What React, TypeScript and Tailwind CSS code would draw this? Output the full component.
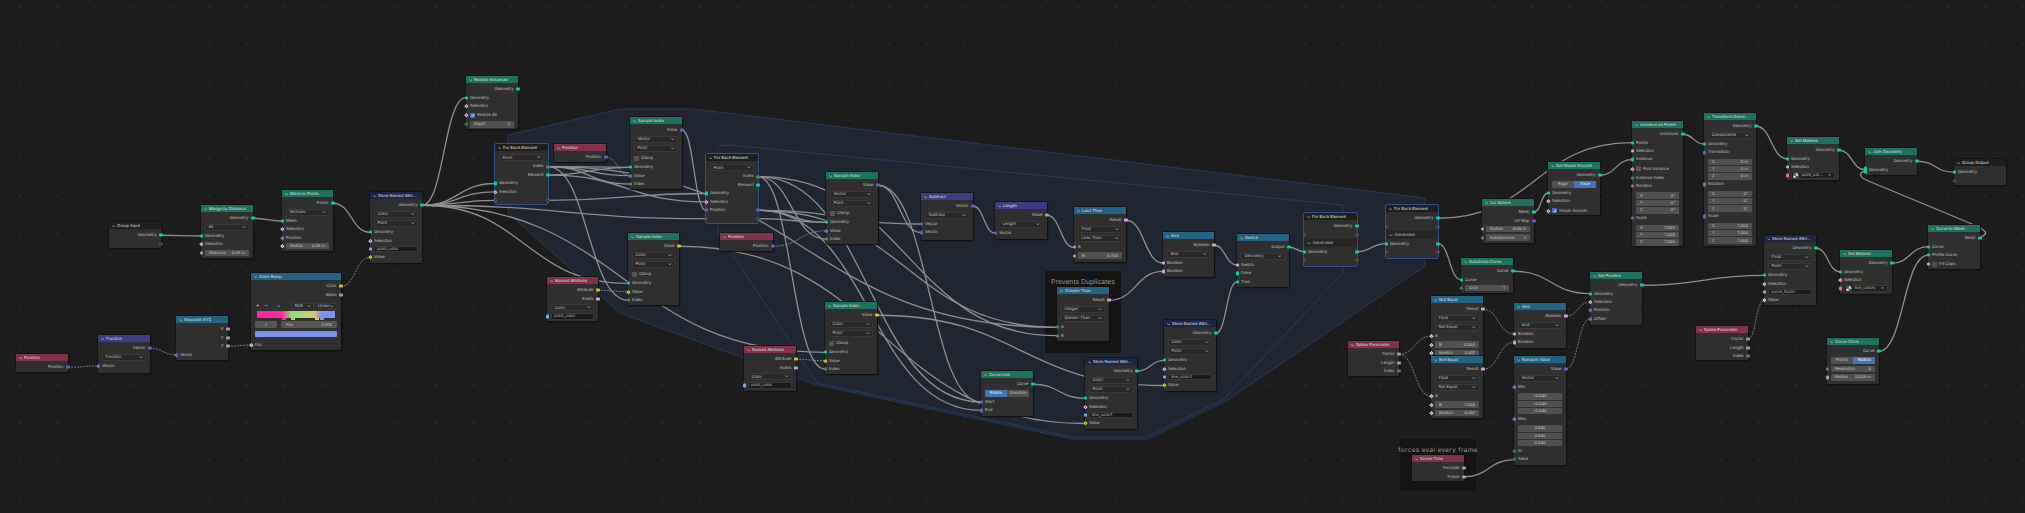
import React from 'react';

type Sock = 'geo' | 'vec' | 'flt' | 'int' | 'bool' | 'col' | 'str' | 'mat' | 'rot' | 'none';
type Kind = 'out' | 'in' | 'both' | 'sel' | 'chk' | 'val' | 'vec' | 'str' | 'mat' | 'seg' | 'gap' | 'sub' | 'ramp' | 'multi';

interface Row {
  k: Kind;
  t?: string;
  v?: string;
  c?: Sock; // socket type
  rc?: Sock; // right socket on 'both' rows
  d?: boolean; // field input: diamond socket
  on?: boolean; // checkbox state, or which half of a segmented control
}

interface GNode {
  id: string;
  title: string;
  head: string;
  x: number;
  y: number;
  w: number;
  h: number;
  rows: Row[];
  zone?: boolean;
}

// row heights, kept in step with rowClass below so link ends land on sockets
const rowH: Record<Kind, number> = {
  out: 8.5, in: 8.4, both: 8.4, sel: 9.3, chk: 10, val: 8.4, vec: 7.4, str: 8.4, mat: 8.4, seg: 9.3, gap: 1.5, sub: 8.5, ramp: 41.8, multi: 8.4,
};

const rowClass: Record<Kind, string> = {
  out: 'h-[8.5px]', in: 'h-[8.4px]', both: 'h-[8.4px]', sel: 'h-[9.3px]', chk: 'h-[10px]', val: 'h-[8.4px]', vec: 'h-[7.4px]', str: 'h-[8.4px]', mat: 'h-[8.4px]', seg: 'h-[9.3px]', gap: 'h-[1.5px]', sub: 'h-[8.5px]', ramp: 'h-[41.8px]', multi: 'h-[8.4px]',
};

const sockBg: Record<Sock, string> = {
  geo: 'bg-[#00d6a3]', vec: 'bg-[#6363c7]', flt: 'bg-[#a1a1a1]', int: 'bg-[#4f8a54]', bool: 'bg-[#cca6d6]', col: 'bg-[#c7c729]', str: 'bg-[#70b2ff]', mat: 'bg-[#eb7582]', rot: 'bg-[#a363c7]', none: 'bg-transparent',
};
const sockBorder: Record<Sock, string> = {
  geo: 'border-[#00d6a3]', vec: 'border-[#8080e0]', flt: 'border-[#e0e0e0]', int: 'border-[#4f8a54]', bool: 'border-[#e0c0ea]', col: 'border-[#e0e030]', str: 'border-[#70b2ff]', mat: 'border-[#eb7582]', rot: 'border-[#a363c7]', none: 'border-[#666666]',
};

const GREEN = 'bg-[#1d725e]';
const RED = 'bg-[#83314a]';
const PURPLE = 'bg-[#3c3c83]';
const BLUE = 'bg-[#246283]';
const NAVY = 'bg-[#1d2546]';
const DARK = 'bg-[#1e1e1e]';

const o = (t: string, c: Sock): Row => ({ k: 'out', t, c });
const i = (t: string, c: Sock, d = false): Row => ({ k: 'in', t, c, d });
const s = (t: string): Row => ({ k: 'sel', t });
const val = (t: string, v: string, c?: Sock, d = false): Row => ({ k: 'val', t, v, c, d });
const vec = (t: string, v: string): Row => ({ k: 'vec', t, v });
const gap: Row = { k: 'gap' };
const vec3 = (a: string, b: string, c: string, d = false): Row[] => [gap, vec(d ? '' : 'X', a), vec(d ? '' : 'Y', b), vec(d ? '' : 'Z', c)];
const both = (t: string, c: Sock, rc: Sock): Row => ({ k: 'both', t, c, rc });

const sampleRows = (type: string, c: Sock): Row[] => [
  o('Value', c), s(type), s('Point'), { k: 'chk', t: 'Clamp' }, i('Geometry', 'geo'), i('Value', c, true), i('Index', 'int'),
];
const storeRows = (type: string, name: string, c: Sock): Row[] => [
  o('Geometry', 'geo'), s(type), s('Point'), i('Geometry', 'geo'), i('Selection', 'bool', true), { k: 'str', t: name, c: 'str' }, i('Value', c, true),
];
const attrRows = (): Row[] => [o('Attribute', 'col'), o('Exists', 'bool'), s('Color'), { k: 'str', t: 'point_color', c: 'str' }];
const zoneOutRows = (): Row[] => [
  o('Geometry', 'geo'), both('', 'none', 'none'), { k: 'sub', t: 'Generated' }, both('Geometry', 'geo', 'geo'), both('', 'none', 'none'),
];
const splineRows = (): Row[] => [o('Factor', 'flt'), o('Length', 'flt'), o('Index', 'int')];
const notEqualRows = (b: string): Row[] => [
  o('Result', 'bool'), s('Float'), s('Not Equal'), i('A', 'flt', true), val('B', b, 'flt', true), val('Epsilon', '0.001', 'flt', true),
];

const nodes: GNode[] = [
  { id: 'gin', title: 'Group Input', head: DARK, x: 109, y: 222, w: 52, h: 26, rows: [o('Geometry', 'geo'), o('', 'none')] },
  { id: 'merge', title: 'Merge by Distance', head: GREEN, x: 201, y: 205, w: 52, h: 53, rows: [o('Geometry', 'geo'), s('All'), i('Geometry', 'geo'), i('Selection', 'bool', true), val('Distance', '0.33 m', 'flt')] },
  { id: 'm2p', title: 'Mesh to Points', head: GREEN, x: 282, y: 190, w: 51, h: 61, rows: [o('Points', 'geo'), s('Vertices'), i('Mesh', 'geo'), i('Selection', 'bool', true), i('Position', 'vec', true), val('Radius', '0.05 m', 'flt', true)] },
  { id: 'store1', title: 'Store Named Attri...', head: NAVY, x: 370, y: 192, w: 52, h: 71, rows: storeRows('Color', 'point_color', 'col') },
  { id: 'ramp', title: 'Color Ramp', head: BLUE, x: 251, y: 273, w: 90, h: 77, rows: [o('Color', 'col'), o('Alpha', 'flt'), { k: 'ramp' }, i('Fac', 'flt', true)] },
  { id: 'sep', title: 'Separate XYZ', head: BLUE, x: 176, y: 316, w: 52, h: 44, rows: [o('X', 'flt'), o('Y', 'flt'), o('Z', 'flt'), i('Vector', 'vec', true)] },
  { id: 'frac', title: 'Fraction', head: PURPLE, x: 98, y: 335, w: 52, h: 38, rows: [o('Vector', 'vec'), s('Fraction'), i('Vector', 'vec', true)] },
  { id: 'pos1', title: 'Position', head: RED, x: 16, y: 354, w: 52, h: 18, rows: [o('Position', 'vec')] },
  { id: 'realize', title: 'Realize Instances', head: GREEN, x: 466, y: 76, w: 52, h: 53, rows: [o('Geometry', 'geo'), i('Geometry', 'geo'), i('Selection', 'bool', true), { k: 'chk', t: 'Realize All', c: 'bool', d: true, on: true }, val('Depth', '0', 'int', true)] },
  { id: 'fe1', title: 'For Each Element', head: DARK, zone: true, x: 495, y: 144, w: 53, h: 60, rows: [s('Point'), o('Index', 'int'), o('Element', 'geo'), i('Geometry', 'geo'), i('Selection', 'bool', true), both('', 'none', 'none')] },
  { id: 'pos2', title: 'Position', head: RED, x: 554, y: 144, w: 52, h: 18, rows: [o('Position', 'vec')] },
  { id: 's1', title: 'Sample Index', head: GREEN, x: 630, y: 117, w: 52, h: 72, rows: sampleRows('Vector', 'vec') },
  { id: 'fe2', title: 'For Each Element', head: DARK, zone: true, x: 706, y: 154, w: 52, h: 69, rows: [s('Point'), o('Index', 'int'), o('Element', 'geo'), i('Geometry', 'geo'), i('Selection', 'bool', true), both('Position', 'vec', 'vec'), both('', 'none', 'none')] },
  { id: 's2', title: 'Sample Index', head: GREEN, x: 826, y: 172, w: 52, h: 72, rows: sampleRows('Vector', 'vec') },
  { id: 's3', title: 'Sample Index', head: GREEN, x: 628, y: 233, w: 51, h: 72, rows: sampleRows('Color', 'col') },
  { id: 'pos3', title: 'Position', head: RED, x: 720, y: 233, w: 53, h: 18, rows: [o('Position', 'vec')] },
  { id: 'na1', title: 'Named Attribute', head: RED, x: 547, y: 277, w: 51, h: 44, rows: attrRows() },
  { id: 'na2', title: 'Named Attribute', head: RED, x: 744, y: 346, w: 52, h: 45, rows: attrRows() },
  { id: 's4', title: 'Sample Index', head: GREEN, x: 825, y: 302, w: 52, h: 72, rows: sampleRows('Color', 'col') },
  { id: 'sub', title: 'Subtract', head: PURPLE, x: 921, y: 193, w: 52, h: 47, rows: [o('Vector', 'vec'), s('Subtract'), i('Vector', 'vec'), i('Vector', 'vec')] },
  { id: 'len', title: 'Length', head: PURPLE, x: 995, y: 202, w: 52, h: 37, rows: [o('Value', 'flt'), s('Length'), i('Vector', 'vec')] },
  { id: 'less', title: 'Less Than', head: BLUE, x: 1074, y: 207, w: 52, h: 55, rows: [o('Result', 'bool'), s('Float'), s('Less Than'), i('A', 'flt'), val('B', '0.700', 'flt')] },
  { id: 'and1', title: 'And', head: BLUE, x: 1163, y: 232, w: 51, h: 45, rows: [o('Boolean', 'bool'), s('And'), i('Boolean', 'bool'), i('Boolean', 'bool')] },
  { id: 'switch', title: 'Switch', head: BLUE, x: 1237, y: 234, w: 52, h: 53, rows: [o('Output', 'geo'), s('Geometry'), i('Switch', 'bool'), i('False', 'geo'), i('True', 'geo')] },
  { id: 'gt', title: 'Greater Than', head: BLUE, x: 1057, y: 287, w: 52, h: 54, rows: [o('Result', 'bool'), s('Integer'), s('Greater Than'), i('A', 'int'), i('B', 'int')] },
  { id: 'line', title: 'Curve Line', head: GREEN, x: 981, y: 371, w: 52, h: 45, rows: [o('Curve', 'geo'), { k: 'seg', t: 'Points', v: 'Direction', on: true }, i('Start', 'vec'), i('End', 'vec')] },
  { id: 'store2', title: 'Store Named Attri...', head: NAVY, x: 1085, y: 358, w: 52, h: 71, rows: storeRows('Color', 'line_color1', 'col') },
  { id: 'store3', title: 'Store Named Attri...', head: NAVY, x: 1164, y: 320, w: 52, h: 71, rows: storeRows('Color', 'line_color2', 'col') },
  { id: 'fe3', title: 'For Each Element', head: DARK, zone: true, x: 1304, y: 213, w: 53, h: 53, rows: zoneOutRows() },
  { id: 'fe4', title: 'For Each Element', head: DARK, zone: true, x: 1386, y: 205, w: 52, h: 53, rows: zoneOutRows() },
  { id: 'sp1', title: 'Spline Parameter', head: RED, x: 1348, y: 341, w: 51, h: 35, rows: splineRows() },
  { id: 'ico', title: 'Ico Sphere', head: GREEN, x: 1482, y: 199, w: 52, h: 44, rows: [o('Mesh', 'geo'), o('UV Map', 'vec'), val('Radius', '0.05 m', 'flt'), val('Subdivisions', '2', 'int')] },
  { id: 'shade', title: 'Set Shade Smooth', head: GREEN, x: 1548, y: 162, w: 52, h: 53, rows: [o('Geometry', 'geo'), { k: 'seg', t: 'Edge', v: 'Face', on: false }, i('Geometry', 'geo'), i('Selection', 'bool', true), { k: 'chk', t: 'Shade Smooth', c: 'bool', d: true, on: true }] },
  { id: 'inst', title: 'Instance on Points', head: GREEN, x: 1632, y: 121, w: 51, h: 125, rows: [o('Instances', 'geo'), i('Points', 'geo'), i('Selection', 'bool'), i('Instance', 'geo'), { k: 'chk', t: 'Pick Instance', c: 'bool', d: true }, i('Instance Index', 'int'), i('Rotation', 'rot'), ...vec3('0°', '0°', '0°'), i('Scale', 'vec'), ...vec3('1.000', '1.000', '1.000')] },
  { id: 'trans', title: 'Transform Geom...', head: GREEN, x: 1704, y: 113, w: 52, h: 133, rows: [o('Geometry', 'geo'), s('Components'), i('Geometry', 'geo'), i('Translation', 'vec'), ...vec3('0 m', '0 m', '0 m'), i('Rotation', 'rot'), ...vec3('0°', '0°', '0°'), i('Scale', 'vec'), ...vec3('1.000', '1.000', '1.000')] },
  { id: 'mat1', title: 'Set Material', head: GREEN, x: 1787, y: 137, w: 52, h: 43, rows: [o('Geometry', 'geo'), i('Geometry', 'geo'), i('Selection', 'bool'), { k: 'mat', t: 'point_col...', c: 'mat' }] },
  { id: 'join', title: 'Join Geometry', head: GREEN, x: 1865, y: 148, w: 52, h: 27, rows: [o('Geometry', 'geo'), { k: 'multi', t: 'Geometry', c: 'geo' }] },
  { id: 'gout', title: 'Group Output', head: DARK, x: 1954, y: 159, w: 52, h: 26, rows: [i('Geometry', 'geo'), i('', 'none')] },
  { id: 'c2m', title: 'Curve to Mesh', head: GREEN, x: 1928, y: 225, w: 52, h: 44, rows: [o('Mesh', 'geo'), i('Curve', 'geo'), i('Profile Curve', 'geo'), { k: 'chk', t: 'Fill Caps', c: 'bool' }] },
  { id: 'store4', title: 'Store Named Attri...', head: NAVY, x: 1764, y: 235, w: 52, h: 70, rows: storeRows('Float', 'curve_factor', 'flt') },
  { id: 'mat2', title: 'Set Material', head: GREEN, x: 1840, y: 250, w: 52, h: 44, rows: [o('Geometry', 'geo'), i('Geometry', 'geo'), i('Selection', 'bool', true), { k: 'mat', t: 'line_colors', c: 'mat' }] },
  { id: 'sp2', title: 'Spline Parameter', head: RED, x: 1696, y: 326, w: 52, h: 34, rows: splineRows() },
  { id: 'circle', title: 'Curve Circle', head: GREEN, x: 1827, y: 338, w: 52, h: 46, rows: [o('Curve', 'geo'), { k: 'seg', t: 'Points', v: 'Radius', on: false }, val('Resolution', '4', 'int'), val('Radius', '0.005 m', 'flt')] },
  { id: 'subdiv', title: 'Subdivide Curve', head: GREEN, x: 1461, y: 258, w: 52, h: 35, rows: [o('Curve', 'geo'), i('Curve', 'geo'), val('Cuts', '1', 'int', true)] },
  { id: 'ne1', title: 'Not Equal', head: BLUE, x: 1431, y: 296, w: 52, h: 62, rows: notEqualRows('0.000') },
  { id: 'ne2', title: 'Not Equal', head: BLUE, x: 1431, y: 356, w: 52, h: 62, rows: notEqualRows('1.000') },
  { id: 'and2', title: 'And', head: BLUE, x: 1514, y: 303, w: 52, h: 45, rows: [o('Boolean', 'bool'), s('And'), i('Boolean', 'bool'), i('Boolean', 'bool')] },
  { id: 'rand', title: 'Random Value', head: BLUE, x: 1514, y: 356, w: 52, h: 109, rows: [o('Value', 'vec'), s('Vector'), i('Min', 'vec', true), ...vec3('-0.040', '-0.040', '-0.040', true), i('Max', 'vec', true), ...vec3('0.040', '0.040', '0.040', true), i('ID', 'int', true), i('Seed', 'int', true)] },
  { id: 'setpos', title: 'Set Position', head: GREEN, x: 1590, y: 272, w: 52, h: 53, rows: [o('Geometry', 'geo'), i('Geometry', 'geo'), i('Selection', 'bool', true), i('Position', 'vec', true), i('Offset', 'vec', true)] },
  { id: 'scene', title: 'Scene Time', head: RED, x: 1412, y: 455, w: 52, h: 26, rows: [o('Seconds', 'flt'), o('Frame', 'flt')] },
];

// from node, from row, to node, to row, dashed (field link)
type Link = [string, number, string, number, boolean?];

const links: Link[] = [
  ['pos1', 0, 'frac', 2, true],
  ['frac', 0, 'sep', 3, true],
  ['sep', 2, 'ramp', 3, true],
  ['ramp', 0, 'store1', 6, true],
  ['gin', 0, 'merge', 2],
  ['merge', 0, 'm2p', 2],
  ['m2p', 0, 'store1', 3],
  ['store1', 0, 'realize', 1],
  ['store1', 0, 'fe1', 3],
  ['store1', 0, 'fe1', 4],
  ['store1', 0, 'fe1', 5],
  ['store1', 0, 'fe2', 6],
  ['store1', 0, 's3', 4],
  ['store1', 0, 's4', 4],
  ['pos2', 0, 's1', 5, true],
  ['fe1', 1, 's1', 4],
  ['fe1', 1, 's1', 5],
  ['fe1', 1, 's1', 6],
  ['fe1', 2, 's1', 4],
  ['fe1', 1, 's3', 6],
  ['fe1', 5, 'fe2', 3],
  ['fe1', 2, 'fe2', 4],
  ['s1', 0, 'fe2', 5],
  ['fe2', 1, 's2', 6],
  ['fe2', 1, 's4', 6],
  ['fe2', 6, 's2', 4],
  ['fe2', 5, 's2', 4],
  ['pos3', 0, 's2', 5, true],
  ['fe2', 5, 'sub', 2],
  ['s2', 0, 'sub', 3],
  ['s2', 0, 'line', 2],
  ['fe2', 1, 'line', 2],
  ['fe2', 5, 'line', 3],
  ['fe2', 5, 'gt', 3],
  ['fe1', 1, 'gt', 3],
  ['fe2', 1, 'gt', 4],
  ['sub', 0, 'len', 2],
  ['len', 0, 'less', 3],
  ['less', 0, 'and1', 2],
  ['gt', 0, 'and1', 3],
  ['and1', 0, 'switch', 2],
  ['store3', 0, 'switch', 4],
  ['switch', 0, 'fe3', 3],
  ['fe3', 3, 'fe4', 3],
  ['s3', 0, 'store2', 6],
  ['s4', 0, 'store3', 6],
  ['na1', 0, 's3', 5, true],
  ['na2', 0, 's4', 5, true],
  ['line', 0, 'store2', 3],
  ['store2', 0, 'store3', 3],
  ['fe4', 0, 'inst', 1],
  ['fe4', 3, 'subdiv', 1],
  ['ico', 0, 'shade', 2],
  ['shade', 0, 'inst', 3],
  ['inst', 0, 'trans', 2],
  ['trans', 0, 'mat1', 1],
  ['mat1', 0, 'join', 1],
  ['join', 0, 'gout', 0],
  ['subdiv', 0, 'setpos', 1],
  ['setpos', 0, 'store4', 3],
  ['sp2', 0, 'store4', 6, true],
  ['store4', 0, 'mat2', 1],
  ['mat2', 0, 'c2m', 1],
  ['circle', 0, 'c2m', 2],
  ['sp1', 0, 'ne1', 3, true],
  ['sp1', 0, 'ne2', 3, true],
  ['ne1', 0, 'and2', 2, true],
  ['ne2', 0, 'and2', 3, true],
  ['and2', 0, 'setpos', 2, true],
  ['rand', 0, 'setpos', 4, true],
  ['scene', 1, 'rand', 13],
];

const zoneOuter = '508,135 620,109 693,109 1425,198 1425,266 1226,401 1148,439 1072,439 817,385 620,313 508,213';
const zoneInner = '718,146 730,145 1343,205 1343,273 1224,399 1146,437 1072,437 817,383 718,232';

const byId = new Map(nodes.map((n) => [n.id, n]));

function socketY(n: GNode, row: number) {
  let y = n.y + 9;
  for (let r = 0; r < row; r++) y += rowH[n.rows[r].k];
  return y + rowH[n.rows[row].k] / 2;
}

function linkPath(l: Link) {
  const a = byId.get(l[0])!;
  const b = byId.get(l[2])!;
  const x1 = a.x + a.w;
  const y1 = socketY(a, l[1]);
  const x2 = b.x;
  const y2 = socketY(b, l[3]);
  const h = Math.abs(x2 - x1) * 0.5;
  return `M${x1} ${y1}C${x1 + h} ${y1} ${x2 - h} ${y2} ${x2} ${y2}`;
}

const Chevron: React.FC<{ className?: string }> = ({ className = '' }) => (
  <svg viewBox="0 0 6 4" className={`w-[3.6px] h-[2.4px] shrink-0 ${className}`} fill="none" stroke="currentColor" strokeWidth="1">
    <path d="M.6.6 3 3.2 5.4.6" />
  </svg>
);

const Socket: React.FC<{ c: Sock; d?: boolean; side: 'l' | 'r' }> = ({ c, d, side }) => {
  const pos = side === 'l' ? 'left-[-1.5px]' : 'right-[-1.5px]';
  if (c === 'none') {
    return <span className={`absolute ${pos} top-1/2 -translate-y-1/2 w-[3.4px] h-[3.4px] rounded-full border border-[#666666] bg-[#262626]`} />;
  }
  if (d) {
    return <span className={`absolute ${pos} top-1/2 -translate-y-1/2 rotate-45 w-[2.8px] h-[2.8px] border-[0.8px] bg-[#2a2a2a] ${sockBorder[c]}`} />;
  }
  return <span className={`absolute ${pos} top-1/2 -translate-y-1/2 w-[3.2px] h-[3.2px] rounded-[1px] ${sockBg[c]}`} />;
};

const Check: React.FC<{ on?: boolean }> = ({ on }) => (
  <span className={`flex items-center justify-center w-[5px] h-[5px] rounded-[1px] shrink-0 ${on ? 'bg-[#4772b3]' : 'bg-[#545454]'}`}>
    {on && (
      <svg viewBox="0 0 6 6" className="w-[4px] h-[4px]" fill="none" stroke="#ffffff" strokeWidth="1.2">
        <path d="M1 3.2 2.5 4.7 5 1.4" />
      </svg>
    )}
  </span>
);

const RampBody: React.FC = () => (
  <div className="relative h-full px-[4px] flex flex-col">
    <div className="h-[8px] mt-[3px] flex items-center gap-[1px]">
      <span className="w-[6px] text-center text-[6px] leading-none">+</span>
      <span className="w-[6px] ml-[2px] text-center text-[6px] leading-none">−</span>
      <Chevron className="ml-[7px]" />
      <div className="ml-[10px] w-[24px] h-[6px] rounded-[1px] bg-[#262626] border border-[#3a3a3a] flex items-center justify-between px-[2px]">
        <span>RGB</span>
        <Chevron />
      </div>
      <div className="w-[24px] h-[6px] rounded-[1px] bg-[#262626] border border-[#3a3a3a] flex items-center justify-between px-[2px]">
        <span>Linear</span>
        <Chevron />
      </div>
    </div>
    <div className="relative mx-[2px] mt-[1px] h-[7px] bg-[linear-gradient(90deg,#ff2aa0_0%,#ff2aa0_32%,#90e070_44%,#90e070_50%,#e0c070_74%,#8090f0_82%,#8090f0_100%)]">
      <span className="absolute left-[25px] bottom-[-2.5px] w-[4px] h-[2.5px] bg-[#ff2aa0]" />
      <span className="absolute left-[34px] bottom-[-2.5px] w-[4px] h-[2.5px] bg-[#90e070]" />
      <span className="absolute left-[58px] bottom-[-2.5px] w-[4px] h-[2.5px] bg-[#f0c070]" />
      <span className="absolute left-[63px] bottom-[-2.5px] w-[4px] h-[2.5px] bg-[#8090f0]" />
    </div>
    <div className="mt-[3.5px] h-[7px] flex gap-[4px]">
      <div className="w-[22px] rounded-[1px] bg-[#545454] flex items-center justify-center">2</div>
      <div className="flex-1 rounded-[1px] bg-[#545454] flex items-center justify-between px-[5px]">
        <span>Pos</span>
        <span>0.814</span>
      </div>
    </div>
    <div className="mt-[2.5px] h-[5.6px] rounded-[1px] bg-[#8090f0]" />
  </div>
);

const RowView: React.FC<{ r: Row }> = ({ r }) => {
  let body: React.ReactNode = null;
  switch (r.k) {
    case 'out':
      body = <span className="ml-auto pr-[4.5px]">{r.t}</span>;
      break;
    case 'in':
    case 'both':
    case 'multi':
      body = <span className="pl-[4px]">{r.t}</span>;
      break;
    case 'sub':
      body = (
        <span className="pl-[3px] flex items-center gap-[2px]">
          <Chevron />
          {r.t}
        </span>
      );
      break;
    case 'sel':
      body = (
        <div className="mx-[4px] w-full h-[7.2px] rounded-[1px] bg-[#282828] border border-[#383838] flex items-center justify-between px-[2.5px]">
          <span>{r.t}</span>
          <Chevron />
        </div>
      );
      break;
    case 'chk':
      body = (
        <div className="pl-[4px] flex items-center gap-[2px]">
          <Check on={r.on} />
          <span>{r.t}</span>
        </div>
      );
      break;
    case 'val':
      body = (
        <div className="mx-[4px] w-full h-[6.4px] rounded-[1px] bg-[#505050] flex items-center justify-between px-[4px]">
          <span>{r.t}</span>
          <span>{r.v}</span>
        </div>
      );
      break;
    case 'vec':
      body = (
        <div className={`mx-[4px] w-full h-[6.4px] rounded-[1px] bg-[#505050] flex items-center px-[4px] ${r.t ? 'justify-between' : 'justify-center'}`}>
          {r.t && <span>{r.t}</span>}
          <span>{r.v}</span>
        </div>
      );
      break;
    case 'str':
      body = <div className="mx-[4px] w-full h-[6.8px] rounded-[1px] bg-[#1a1a1a] border border-[#383838] flex items-center px-[2px]">{r.t}</div>;
      break;
    case 'mat':
      body = (
        <div className="mx-[4px] w-full h-[6.8px] rounded-[1px] bg-[#1f1f1f] border border-[#383838] flex items-center gap-[3px] px-[1px]">
          <svg viewBox="0 0 10 10" className="w-[5.5px] h-[5.5px] shrink-0">
            <circle cx="5" cy="5" r="5" fill="#d8d8d8" />
            <path d="M5 0A5 5 0 0 0 0 5H5ZM5 5V10A5 5 0 0 0 10 5Z" fill="#444444" />
          </svg>
          <span className="flex-1">{r.t}</span>
          <span className="pr-[2px]">×</span>
        </div>
      );
      break;
    case 'seg':
      body = (
        <div className="mx-[4px] w-full h-[6.8px] flex gap-[0.5px]">
          <div className={`flex-1 rounded-l-[1px] flex items-center justify-center ${r.on ? 'bg-[#4772b3] text-white' : 'bg-[#505050]'}`}>{r.t}</div>
          <div className={`flex-1 rounded-r-[1px] flex items-center justify-center ${r.on ? 'bg-[#505050]' : 'bg-[#4772b3] text-white'}`}>{r.v}</div>
        </div>
      );
      break;
    case 'ramp':
      body = (
        <div className="w-full h-full">
          <RampBody />
        </div>
      );
      break;
    default:
      break;
  }
  return (
    <div className={`relative flex items-center shrink-0 ${rowClass[r.k]} ${r.k === 'sub' ? 'bg-[#262626]' : ''}`}>
      {body}
      {r.k === 'out' && r.c && <Socket c={r.c} side="r" />}
      {r.k === 'both' && r.rc && <Socket c={r.rc} side="r" />}
      {r.k === 'multi' && <span className="absolute left-[-1.5px] top-1/2 -translate-y-[3.5px] w-[3px] h-[7px] rounded-[1px] bg-[#00d6a3]" />}
      {r.k !== 'out' && r.k !== 'multi' && r.c && <Socket c={r.c} d={r.d} side="l" />}
    </div>
  );
};

const NodeBox: React.FC<{ n: GNode }> = ({ n }) => (
  <div
    className={`absolute flex flex-col rounded-[1px] bg-[#2f2f2f] text-[#c4c4c4] shadow-[0_0_0_0.7px_#111111,1px_1px_1.5px_#0f0f0f] ${n.zone ? 'outline outline-1 outline-[#2f5288]' : ''}`}
    style={{ left: n.x, top: n.y, width: n.w, height: n.h }}
  >
    <div className={`flex items-center gap-[2px] h-[7.4px] px-[2.5px] shrink-0 text-[#d2d2d2] font-medium ${n.head}`}>
      <Chevron />
      <span className="whitespace-nowrap overflow-hidden">{n.title}</span>
    </div>
    <div className="h-[1.6px] shrink-0" />
    {n.rows.map((r, idx) => (
      <RowView key={idx} r={r} />
    ))}
  </div>
);

export default function App() {
  return (
    <div className="relative w-[2025px] h-[513px] overflow-hidden bg-[#1c1c1c] bg-[radial-gradient(circle,#292929_0.7px,transparent_1px)] bg-[length:37.8px_37.8px] bg-[position:1px_-12px] font-[Inter,sans-serif] text-[4.1px] leading-none whitespace-nowrap [text-rendering:geometricPrecision]">
      <svg className="absolute inset-0" width="2025" height="513" viewBox="0 0 2025 513" fill="none">
        <polygon points={zoneOuter} fill="#1f2632" stroke="#2a4570" strokeWidth="0.7" />
        <polygon points={zoneInner} stroke="#2a4570" strokeWidth="0.7" />
      </svg>

      <div className="absolute left-[1045px] top-[271px] w-[76px] h-[82px] rounded-[1px] bg-[#141414] flex justify-center">
        <span className="mt-[8px] h-fit text-[6.8px] text-[#9a9a9a]">Prevents Duplicates</span>
      </div>
      <div className="absolute left-[1400px] top-[439px] w-[76px] h-[52px] rounded-[1px] bg-[#141414] flex justify-center">
        <span className="mt-[8px] h-fit text-[6.4px] tracking-[0.35px] text-[#9a9a9a]">forces eval every frame</span>
      </div>

      <svg className="absolute inset-0" width="2025" height="513" viewBox="0 0 2025 513" fill="none" stroke="#8f8f8f" strokeWidth="1.3">
        {links.map((l, idx) => (
          <path key={idx} d={linkPath(l)} strokeWidth={l[4] ? 0.8 : 1.3} strokeDasharray={l[4] ? '2 1' : undefined} />
        ))}
        <path d="M1980 237C1990 234 1986 230 1972 224L1866 180C1858 176 1860 172 1865 171" />
      </svg>

      {nodes.map((n) => (
        <NodeBox key={n.id} n={n} />
      ))}
    </div>
  );
}
